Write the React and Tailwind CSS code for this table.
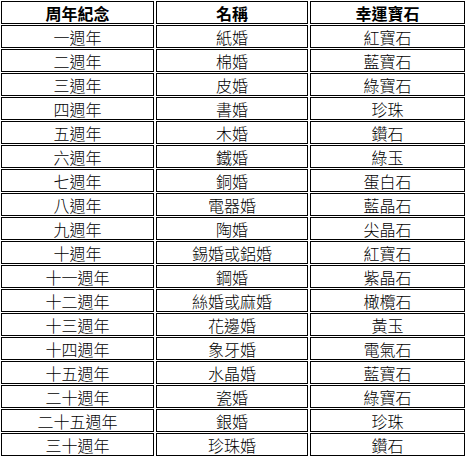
import React from "react";

const rows = [
  ["一週年", "紙婚", "紅寶石"],
  ["二週年", "棉婚", "藍寶石"],
  ["三週年", "皮婚", "綠寶石"],
  ["四週年", "書婚", "珍珠"],
  ["五週年", "木婚", "鑽石"],
  ["六週年", "鐵婚", "綠玉"],
  ["七週年", "銅婚", "蛋白石"],
  ["八週年", "電器婚", "藍晶石"],
  ["九週年", "陶婚", "尖晶石"],
  ["十週年", "錫婚或鋁婚", "紅寶石"],
  ["十一週年", "鋼婚", "紫晶石"],
  ["十二週年", "絲婚或麻婚", "橄欖石"],
  ["十三週年", "花邊婚", "黃玉"],
  ["十四週年", "象牙婚", "電氣石"],
  ["十五週年", "水晶婚", "藍寶石"],
  ["二十週年", "瓷婚", "綠寶石"],
  ["二十五週年", "銀婚", "珍珠"],
  ["三十週年", "珍珠婚", "鑽石"],
];

function Cell({ children, bold }) {
  return (
    <div
      className={`h-[23px] border border-black flex items-center justify-center text-[16px] leading-none text-black ${bold ? "font-bold" : "font-light"}`}
    >
      {children}
    </div>
  );
}

export default function App() {
  return (
    <div
      className="w-[466px] h-[457px] bg-white pt-[1px] pl-[1px]"
      style={{ fontFamily: '"Noto Sans CJK TC", "Noto Sans CJK SC", sans-serif' }}
    >
      <div className="grid grid-cols-[153px_152px_155px] gap-x-[2px] gap-y-[1px]">
        <Cell bold>周年紀念</Cell>
        <Cell bold>名稱</Cell>
        <Cell bold>幸運寶石</Cell>
        {rows.map((r, i) => (
          <React.Fragment key={i}>
            <Cell>{r[0]}</Cell>
            <Cell>{r[1]}</Cell>
            <Cell>{r[2]}</Cell>
          </React.Fragment>
        ))}
      </div>
    </div>
  );
}
